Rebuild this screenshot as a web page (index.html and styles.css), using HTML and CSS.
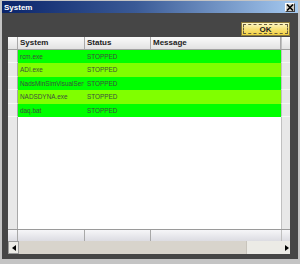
FILE: index.html
```html
<!DOCTYPE html>
<html lang="en">
<head>
  <meta charset="UTF-8">
  <title>System</title>
  <link rel="stylesheet" href="styles.css">
</head>
<body>
  <div class="window">
    <div class="titlebar">
      <span class="title">System</span>
      <span class="close">
        <svg width="8" height="7" viewBox="0 0 8 7"><path d="M1 0.5 L7 6.5 M7 0.5 L1 6.5" stroke="#000" stroke-width="1.6"/></svg>
      </span>
    </div>
    <div class="client">
      <div class="toolbar">
        <button class="ok">OK</button>
      </div>
      <div class="grid">
        <div class="row head">
          <div class="rh"></div>
          <div class="c">System</div>
          <div class="c">Status</div>
          <div class="c">Message</div>
          <div class="rx"></div>
        </div>
        <div class="rows">
          <div class="row data">
            <div class="rh"></div><div class="c">rcm.exe</div><div class="c">STOPPED</div><div class="c"></div><div class="rx"></div>
          </div>
          <div class="row data alt">
            <div class="rh"></div><div class="c">ADI.exe</div><div class="c">STOPPED</div><div class="c"></div><div class="rx"></div>
          </div>
          <div class="row data">
            <div class="rh"></div><div class="c"><span class="clip">NadsMinSimVisualServer.exe</span></div><div class="c">STOPPED</div><div class="c"></div><div class="rx"></div>
          </div>
          <div class="row data alt">
            <div class="rh"></div><div class="c">NADSDYNA.exe</div><div class="c">STOPPED</div><div class="c"></div><div class="rx"></div>
          </div>
          <div class="row data">
            <div class="rh"></div><div class="c">daq.bat</div><div class="c">STOPPED</div><div class="c"></div><div class="rx"></div>
          </div>
        </div>
        <div class="row empty">
          <div class="rh"></div><div class="c"></div><div class="c"></div><div class="c"></div><div class="rx"></div>
        </div>
        <div class="row foot">
          <div class="rh"></div><div class="c"></div><div class="c"></div><div class="c"></div><div class="rx"></div>
        </div>
        <div class="hscroll">
          <div class="arrow">
            <svg width="4" height="6" viewBox="0 0 4 6"><path d="M4 0 L0 3 L4 6 Z" fill="#000"/></svg>
          </div>
          <div class="track"></div>
          <div class="thumb"></div>
          <div class="arrow right">
            <svg width="4" height="6" viewBox="0 0 4 6"><path d="M0 0 L4 3 L0 6 Z" fill="#000"/></svg>
          </div>
        </div>
      </div>
    </div>
  </div>
</body>
</html>
```

FILE: styles.css
```css
body {
  margin: 0;
  padding: 0;
  background-color: #c4c4c4;
  font-family: 'Liberation Sans', Arial, sans-serif;
}
.window {
  width: 300px;
  height: 264px;
  box-sizing: border-box;
  padding: 1px 2px 5px 2px;
  background-color: #c4c4c4;
  display: flex;
  flex-direction: column;
}
.titlebar {
  height: 12px;
  flex: none;
  display: flex;
  align-items: center;
  justify-content: space-between;
  padding: 0 3px 0 2px;
  background: linear-gradient(to right, #0a246a, #3a5a96 45%, #a6caf0);
}
.title {
  color: white;
  font-weight: bold;
  font-size: 8px;
}
.close {
  width: 10px;
  height: 9px;
  box-sizing: border-box;
  display: flex;
  align-items: center;
  justify-content: center;
  background-color: #d4d0c8;
  border: 1px solid;
  border-color: #fff #404040 #404040 #fff;
}
.client {
  flex: 1;
  display: flex;
  flex-direction: column;
  background-color: #464646;
  padding: 0 0 5px 6px;
}
.toolbar {
  height: 24px;
  flex: none;
  display: flex;
  justify-content: flex-end;
  align-items: flex-start;
  padding: 9px 8px 0 0;
  box-sizing: border-box;
}
.ok {
  width: 49px;
  height: 14px;
  padding: 0;
  font-family: 'Liberation Sans', Arial, sans-serif;
  font-size: 8px;
  font-weight: bold;
  color: #222;
  background: linear-gradient(to bottom, #fff8cc, #f8e278 50%, #f2d040);
  border: 1px solid #8c7a3a;
  outline: 1px dashed #6a6040;
  outline-offset: -3px;
}
.grid {
  width: 282px;
  flex: 1;
  display: flex;
  flex-direction: column;
  background-color: white;
}
.row {
  display: grid;
  grid-template-columns: 10px 67px 66px 130px 9px;
}
.row .c {
  overflow: hidden;
  white-space: nowrap;
  padding-left: 2px;
}
.clip {
  display: block;
  width: 64px;
  overflow: hidden;
}
.rh, .rx {
  background-color: #e8e8e8;
}
.rh {
  border-right: 1px solid #a8a8a8;
}
.rx {
  border-left: 1px solid #c0c0c0;
}
.head {
  height: 13px;
  flex: none;
  box-sizing: border-box;
  border-bottom: 1px solid #a0a0a0;
  background: linear-gradient(to bottom, #fafafa, #e2e2e2);
}
.head .c {
  font-size: 8px;
  font-weight: bold;
  color: #222;
  line-height: 12px;
  border-right: 1px solid #a8a8a8;
}
.head .rh, .head .rx {
  background: transparent;
}
.rows {
  display: grid;
  grid-auto-rows: 13.4px;
  flex: none;
}
.data .c {
  background-color: #00ff00;
  color: #3e4e3e;
  font-size: 6.4px;
  line-height: 13px;
}
.data.alt .c {
  background-color: #80ff00;
}
.data .rh, .data .rx {
  border-bottom: 1px solid #f6f6f6;
}
.empty {
  flex: 1;
}
.foot {
  height: 12px;
  flex: none;
  box-sizing: border-box;
  border-top: 1px solid #9a9a9a;
  background: linear-gradient(to bottom, #f6f6f8, #dcdce2);
}
.foot .c {
  border-right: 1px solid #a8a8a8;
}
.foot .c:nth-child(4) {
  border-right: none;
}
.foot .rh, .foot .rx {
  background: transparent;
}
.hscroll {
  height: 13px;
  flex: none;
  display: flex;
  background-color: #d8d4cc;
}
.arrow {
  width: 11px;
  box-sizing: border-box;
  display: flex;
  align-items: center;
  justify-content: center;
  background-color: #ecebe6;
  border: 1px solid #9c9c9c;
}
.arrow.right {
  width: 9px;
  border: none;
  justify-content: flex-end;
  padding-right: 1px;
}
.track {
  flex: 1;
}
.thumb {
  width: 34px;
  background-color: #ecebe6;
  border-left: 1px solid #c8c4bc;
}
```
